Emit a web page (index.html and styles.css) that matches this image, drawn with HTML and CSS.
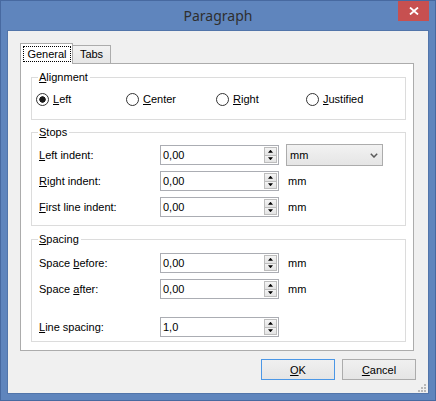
FILE: index.html
```html
<!DOCTYPE html>
<html>
<head>
<meta charset="utf-8">
<title>Paragraph</title>
<link rel="stylesheet" href="styles.css">
</head>
<body>
<div class="window">
  <div class="titlebar">
    <span class="tb-spacer"></span>
    <div class="title">Paragraph</div>
    <button class="close" aria-label="Close">
      <svg width="10" height="8" viewBox="0 0 10 8"><path d="M1 0.5 L9 7.5 M9 0.5 L1 7.5" stroke="#fff" stroke-width="1.8" fill="none"/></svg>
    </button>
  </div>
  <div class="client">
    <div class="tabstrip">
      <div class="tab active"><span class="focus">General</span></div>
      <div class="tab">Tabs</div>
    </div>
    <div class="panel">
      <fieldset class="group g-align">
        <legend><u>A</u>lignment</legend>
        <div class="radios">
          <label class="radio"><span class="circle checked"></span><span><u>L</u>eft</span></label>
          <label class="radio"><span class="circle"></span><span><u>C</u>enter</span></label>
          <label class="radio"><span class="circle"></span><span><u>R</u>ight</span></label>
          <label class="radio"><span class="circle"></span><span><u>J</u>ustified</span></label>
        </div>
      </fieldset>
      <fieldset class="group g-stops">
        <legend><u>S</u>tops</legend>
        <div class="rows">
          <div class="row">
            <span class="lbl"><u>L</u>eft indent:</span>
            <div class="spin"><span class="val">0,00</span><span class="spinbtns"><span class="sb up"></span><span class="sb down"></span></span></div>
            <div class="combo"><span>mm</span><svg width="8" height="5" viewBox="0 0 8 5"><path d="M0.8 0.8 L4 4 L7.2 0.8" stroke="#5a5a5a" stroke-width="1.5" fill="none"/></svg></div>
          </div>
          <div class="row">
            <span class="lbl"><u>R</u>ight indent:</span>
            <div class="spin"><span class="val">0,00</span><span class="spinbtns"><span class="sb up"></span><span class="sb down"></span></span></div>
            <span class="unit">mm</span>
          </div>
          <div class="row">
            <span class="lbl"><u>F</u>irst line indent:</span>
            <div class="spin"><span class="val">0,00</span><span class="spinbtns"><span class="sb up"></span><span class="sb down"></span></span></div>
            <span class="unit">mm</span>
          </div>
        </div>
      </fieldset>
      <fieldset class="group g-spacing">
        <legend><u>S</u>pacing</legend>
        <div class="rows">
          <div class="row">
            <span class="lbl">Space <u>b</u>efore:</span>
            <div class="spin"><span class="val">0,00</span><span class="spinbtns"><span class="sb up"></span><span class="sb down"></span></span></div>
            <span class="unit">mm</span>
          </div>
          <div class="row">
            <span class="lbl">Space <u>a</u>fter:</span>
            <div class="spin"><span class="val">0,00</span><span class="spinbtns"><span class="sb up"></span><span class="sb down"></span></span></div>
            <span class="unit">mm</span>
          </div>
          <div class="row sep">
            <span class="lbl"><u>L</u>ine spacing:</span>
            <div class="spin"><span class="val">1,0</span><span class="spinbtns"><span class="sb up"></span><span class="sb down"></span></span></div>
          </div>
        </div>
      </fieldset>
    </div>
    <div class="buttons">
      <button class="btn default"><u>O</u>K</button>
      <button class="btn"><u>C</u>ancel</button>
    </div>
    <svg class="grip" width="9" height="9" viewBox="0 0 9 9">
      <rect x="6" y="0" width="2" height="2" fill="#b8b8b8"/>
      <rect x="3" y="3" width="2" height="2" fill="#b8b8b8"/>
      <rect x="6" y="3" width="2" height="2" fill="#b8b8b8"/>
      <rect x="0" y="6" width="2" height="2" fill="#b8b8b8"/>
      <rect x="3" y="6" width="2" height="2" fill="#b8b8b8"/>
      <rect x="6" y="6" width="2" height="2" fill="#b8b8b8"/>
    </svg>
  </div>
</div>
</body>
</html>
```

FILE: styles.css
```css
* { box-sizing: border-box; }
html, body { margin: 0; padding: 0; }
body {
  width: 436px;
  height: 401px;
  overflow: hidden;
  font-family: "Liberation Sans", Arial, sans-serif;
  font-size: 11px;
  color: #000;
}
u { text-decoration: underline; text-underline-offset: 1px; }

.window {
  width: 436px;
  height: 401px;
  background: #5f85bd;
  border: 1px solid #4769a0;
  padding: 0 6px 6px;
  display: flex;
  flex-direction: column;
}

.titlebar {
  height: 29px;
  flex: none;
  display: grid;
  grid-template-columns: 1fr auto 1fr;
  align-items: start;
}
.title {
  font-family: "Noto Sans", "Open Sans", sans-serif;
  font-size: 14px;
  line-height: 29px;
  color: #2f2f2f;
}
.close {
  justify-self: end;
  width: 31px;
  height: 20px;
  background: #c75050;
  border: 0;
  padding: 0;
  display: flex;
  align-items: center;
  justify-content: center;
}

.client {
  height: 364px;
  flex: none;
  background: #f0f0f0;
  border: 1px solid #5275aa;
  padding: 12px 14px 0 12px;
  position: relative;
  display: flex;
  flex-direction: column;
}

.tabstrip {
  height: 20px;
  display: flex;
  align-items: flex-end;
}
.tab {
  height: 18px;
  width: 39px;
  margin-left: -1px;
  border: 1px solid #acacac;
  border-bottom: 0;
  background: linear-gradient(#f2f2f2, #e6e6e6);
  text-align: center;
  line-height: 17px;
}
.tab.active {
  width: 53px;
  height: 21px;
  margin-left: 0;
  margin-bottom: -1px;
  background: #fff;
  position: relative;
  z-index: 1;
  padding: 2px 0 0 2px;
}
.focus {
  display: block;
  width: 48px;
  height: 16px;
  border: 1px dotted #000;
  line-height: 14px;
  text-align: center;
}

.panel {
  height: 288px;
  border: 1px solid #acacac;
  background: #fff;
  padding: 7px 7px 0 10px;
  display: flex;
  flex-direction: column;
}

.group {
  margin: 0;
  width: 375px;
  min-width: 0;
  border: 1px solid #dcdcdc;
  padding: 0 7px;
}
.group legend {
  padding: 0 2px 0 1px;
  margin-left: -1px;
  line-height: 13px;
}
.g-align { padding-top: 5px; padding-bottom: 10px; }
.g-stops { margin-top: 6px; padding-top: 6px; padding-bottom: 8px; }
.g-spacing { margin-top: 7px; padding-top: 7px; padding-bottom: 4px; }

.radios {
  display: flex;
  align-items: center;
  height: 20px;
  margin-left: -3px;
}
.radio {
  width: 90px;
  display: flex;
  align-items: center;
  gap: 4px;
}
.circle {
  width: 13px;
  height: 13px;
  border: 1px solid #333;
  border-radius: 50%;
  background: #fff;
  flex: none;
}
.circle.checked {
  background: radial-gradient(circle, #1a1a1a 0 2.9px, #fff 3.5px);
}

.rows {
  display: flex;
  flex-direction: column;
  gap: 6px;
}
.row {
  display: grid;
  grid-template-columns: 114px 119px auto;
  column-gap: 7px;
  height: 20px;
  align-items: center;
}
.row.sep { margin-top: 12px; }

.spin {
  height: 20px;
  border: 1px solid #abadb3;
  background: #fff;
  display: flex;
}
.val {
  flex: 1;
  padding-left: 2px;
  line-height: 18px;
}
.spinbtns {
  width: 13px;
  margin: 1px 1px 1px 0;
  display: flex;
  flex-direction: column;
}
.sb {
  flex: 1;
  border: 1px solid #bdbdbd;
  background: linear-gradient(#f4f4f4, #e3e3e3);
  display: flex;
  align-items: center;
  justify-content: center;
}
.sb::after {
  content: "";
  width: 5px;
  height: 3px;
  background: #000;
}
.sb.up::after { clip-path: polygon(50% 0, 100% 100%, 0 100%); }
.sb.down { margin-top: -1px; }
.sb.down::after { clip-path: polygon(0 0, 100% 0, 50% 100%); }

.combo {
  width: 97px;
  height: 22px;
  margin: -1px 0;
  border: 1px solid #acacac;
  background: linear-gradient(#f2f2f2, #e5e5e5);
  display: flex;
  align-items: center;
  justify-content: space-between;
  padding: 0 4px 0 3px;
}
.unit { padding-left: 2px; }

.buttons {
  display: flex;
  justify-content: flex-end;
  gap: 7px;
  margin-top: 8px;
  margin-right: -2px;
}
.btn {
  width: 74px;
  height: 21px;
  border: 1px solid #acacac;
  background: linear-gradient(#f0f0f0, #e5e5e5);
  font: inherit;
  color: #000;
  padding: 0;
}
.btn.default { border-color: #4b97e6; }

.grip {
  position: absolute;
  right: 1px;
  bottom: 0;
}
```
